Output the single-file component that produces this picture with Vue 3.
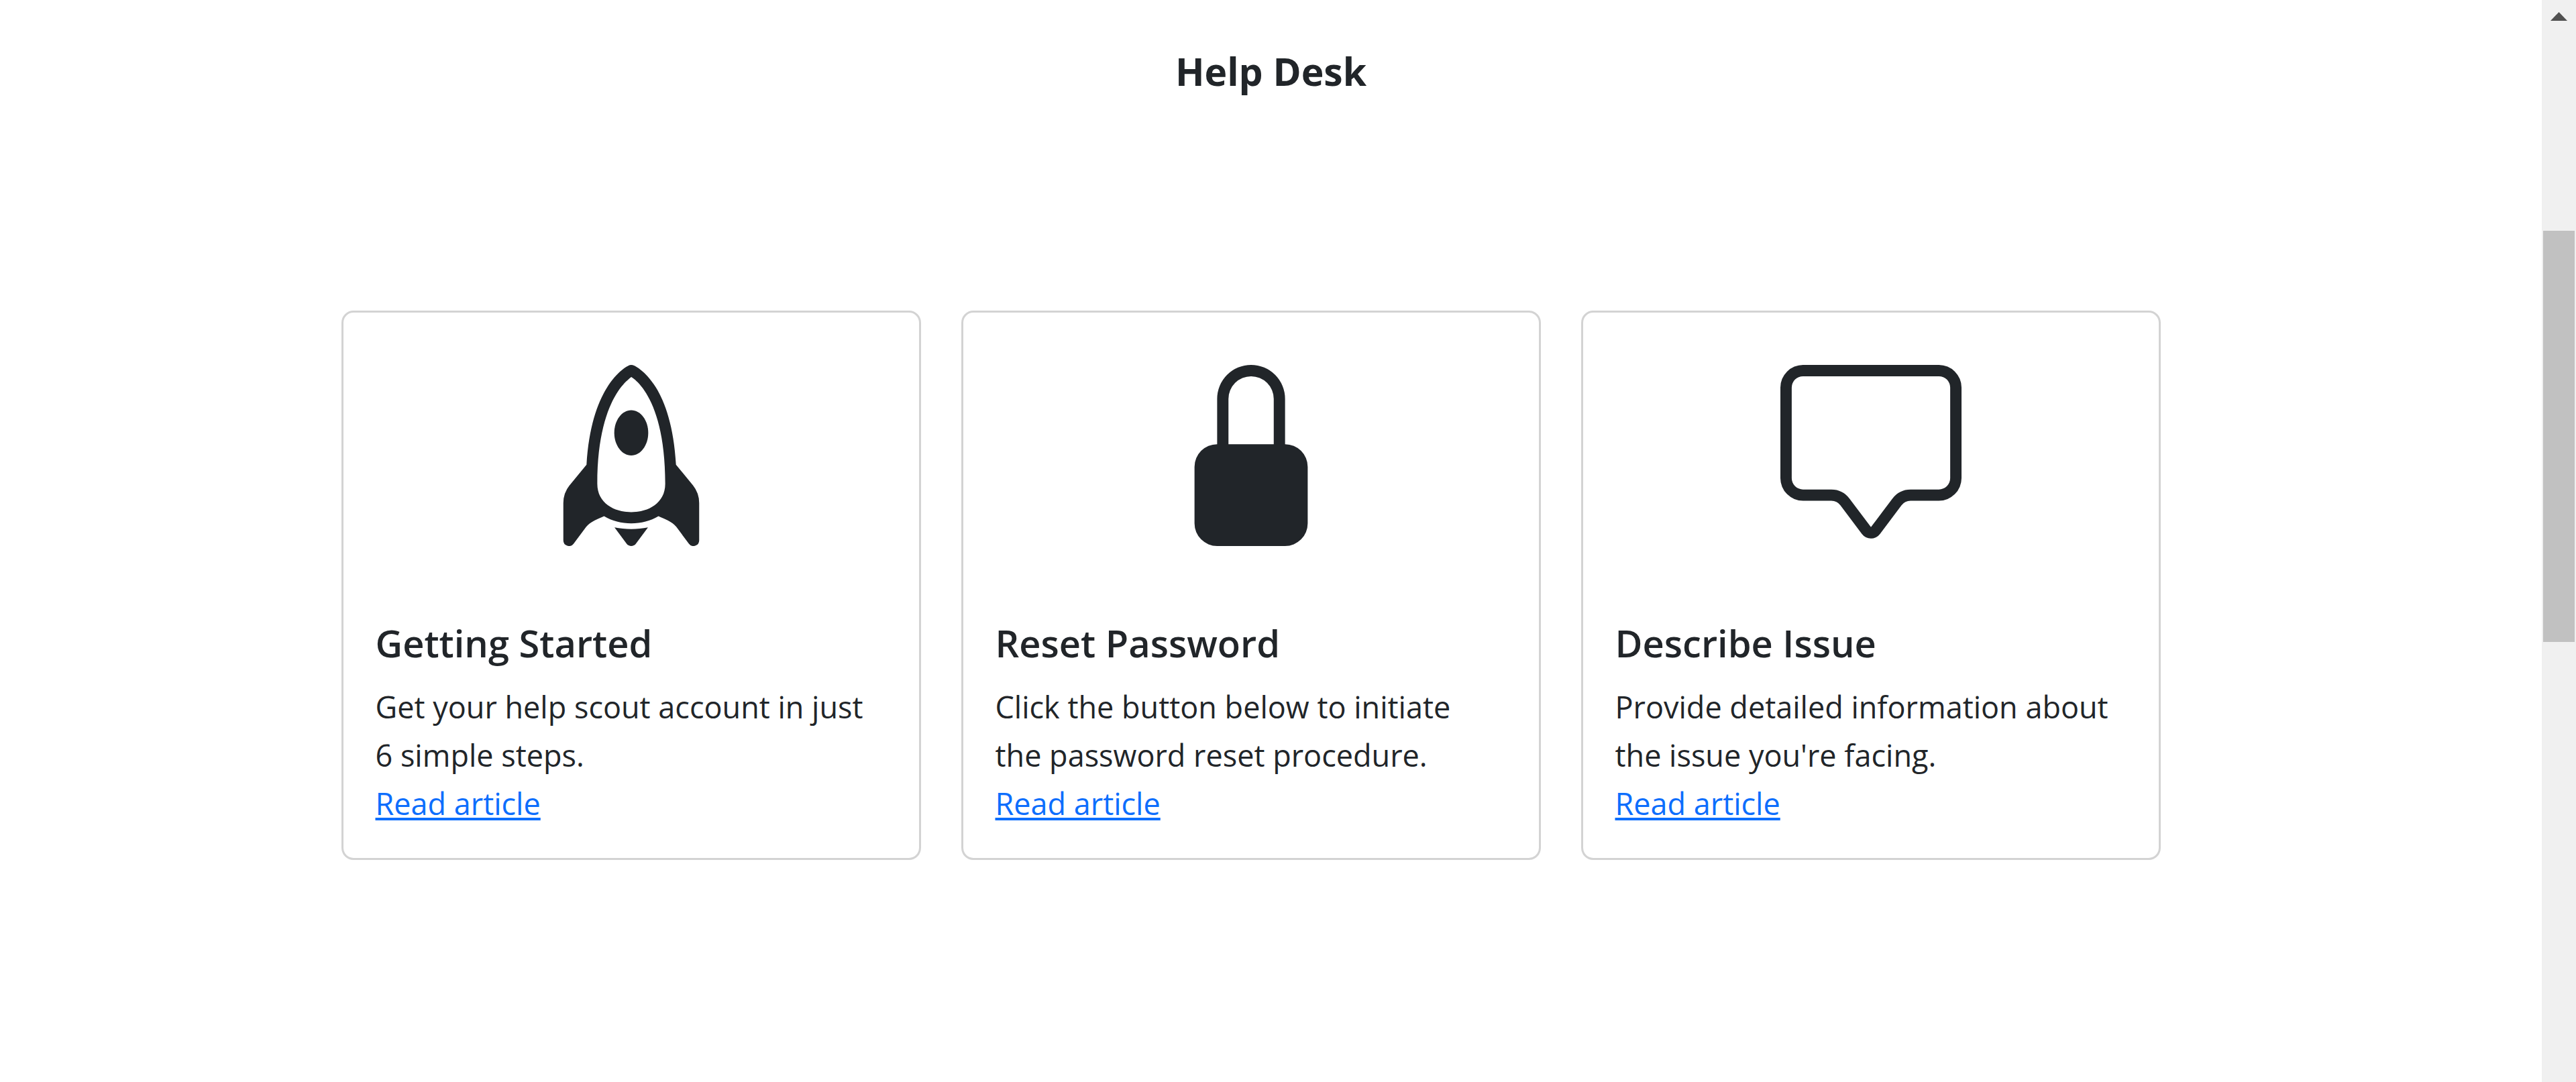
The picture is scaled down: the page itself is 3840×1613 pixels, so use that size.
<script setup>
const cards = [
  {
    title: 'Getting Started',
    text: 'Get your help scout account in just 6 simple steps.',
    paths: [
      'M8 8c.828 0 1.5-.895 1.5-2S8.828 4 8 4s-1.5.895-1.5 2S7.172 8 8 8Z',
      'M11.953 8.81c-.195-3.388-.968-5.507-1.777-6.819C9.707 1.233 9.23.751 8.857.454a3.495 3.495 0 0 0-.463-.315A2.19 2.19 0 0 0 8.25.064.546.546 0 0 0 8 0a.549.549 0 0 0-.266.073 2.312 2.312 0 0 0-.142.08 3.67 3.67 0 0 0-.459.33c-.37.308-.844.803-1.31 1.57-.805 1.322-1.577 3.433-1.774 6.756l-1.497 1.826-.004.005A2.5 2.5 0 0 0 2 12.202V15.5a.5.5 0 0 0 .9.3l1.125-1.5c.166-.222.42-.4.752-.57.214-.108.414-.192.625-.281l.198-.084c.7.428 1.55.635 2.4.635.85 0 1.7-.207 2.4-.635.067.03.132.056.196.083.213.09.413.174.627.282.332.17.586.348.752.57l1.125 1.5a.5.5 0 0 0 .9-.3v-3.298a2.5 2.5 0 0 0-.548-1.562l-1.499-1.83ZM8.009 1.073c.063.04.14.094.226.163.284.226.683.621 1.09 1.28C10.137 3.836 11 6.237 11 10.5c0 .858-.374 1.48-.943 1.893C9.517 12.786 8.781 13 8 13c-.781 0-1.517-.214-2.057-.607C5.373 11.979 5 11.358 5 10.5c0-4.182.86-6.586 1.677-7.928.409-.67.81-1.082 1.096-1.32.09-.076.17-.135.236-.18Z',
      'M9.479 14.361c-.48.093-.98.139-1.479.139-.5 0-.999-.046-1.479-.139L7.6 15.8a.5.5 0 0 0 .8 0l1.079-1.439Z',
    ],
  },
  {
    title: 'Reset Password',
    text: 'Click the button below to initiate the password reset procedure.',
    paths: [
      'M8 1a2 2 0 0 1 2 2v4H6V3a2 2 0 0 1 2-2zm3 6V3a3 3 0 0 0-6 0v4a2 2 0 0 0-2 2v5a2 2 0 0 0 2 2h6a2 2 0 0 0 2-2V9a2 2 0 0 0-2-2z',
    ],
  },
  {
    title: 'Describe Issue',
    text: "Provide detailed information about the issue you're facing.",
    paths: [
      'M14 1a1 1 0 0 1 1 1v8a1 1 0 0 1-1 1h-2.5a2 2 0 0 0-1.6.8L8 14.333 6.1 11.8a2 2 0 0 0-1.6-.8H2a1 1 0 0 1-1-1V2a1 1 0 0 1 1-1h12zM2 0a2 2 0 0 0-2 2v8a2 2 0 0 0 2 2h2.5a1 1 0 0 1 .8.4l1.9 2.533a1 1 0 0 0 1.6 0l1.9-2.533a1 1 0 0 1 .8-.4H14a2 2 0 0 0 2-2V2a2 2 0 0 0-2-2H2z',
    ],
  },
]
</script>

<template>
  <div class="page">
    <main class="content">
      <h1 class="title">Help Desk</h1>
      <section class="cards">
        <article v-for="card in cards" :key="card.title" class="card">
          <svg class="icon" viewBox="0 0 16 16" fill="currentColor" aria-hidden="true">
            <path v-for="d in card.paths" :key="d" :d="d" fill-rule="evenodd" />
          </svg>
          <div class="card-body">
            <h2 class="card-title">{{ card.title }}</h2>
            <p class="card-text">{{ card.text }}</p>
            <a class="card-link" href="#">Read article</a>
          </div>
        </article>
      </section>
    </main>
    <div class="scrollbar" aria-hidden="true">
      <svg class="arrow" viewBox="0 0 25 13"><path d="M12.5 0 25 13H0z" fill="#505050" /></svg>
      <div class="thumb"></div>
    </div>
  </div>
</template>

<style>
body {
  margin: 0;
  background: #fff;
}
</style>

<style scoped>
.page {
  display: flex;
  min-height: 100vh;
  color: #212529;
  font-family: "Segoe UI", "Open Sans", "Noto Sans", sans-serif;
  font-size: 45px;
  line-height: 72px;
}

.content {
  flex: 1;
  min-width: 0;
}

.title {
  margin: 70px 0 321px;
  text-align: center;
  font-size: 57px;
  font-weight: 700;
  line-height: 72px;
}

.cards {
  display: flex;
  justify-content: center;
}

.card {
  box-sizing: border-box;
  flex: 0 1 864px;
  min-width: 0;
  margin-right: 60px;
  border: 3px solid #d3d3d3;
  border-radius: 18px;
}

.icon {
  display: block;
  width: 270px;
  height: 270px;
  margin: 78px auto 57px;
}

.card-body {
  padding: 51px 48px 45px;
}

.card-title {
  margin: 0 0 24px;
  font-size: 56px;
  font-weight: 600;
  line-height: 72px;
}

.card-text {
  max-width: 750px;
  margin: 0;
}

.card-link {
  display: block;
  width: fit-content;
  color: #0d6efd;
  text-decoration: underline;
  text-decoration-thickness: 4px;
  text-underline-offset: 4px;
}

.scrollbar {
  display: flex;
  flex-direction: column;
  align-items: center;
  width: 51px;
  background: #f0f0f0;
}

.arrow {
  width: 25px;
  height: 13px;
  margin: 18px 0 313px;
}

.thumb {
  width: 47px;
  height: 613px;
  background: #c1c1c1;
}
</style>
